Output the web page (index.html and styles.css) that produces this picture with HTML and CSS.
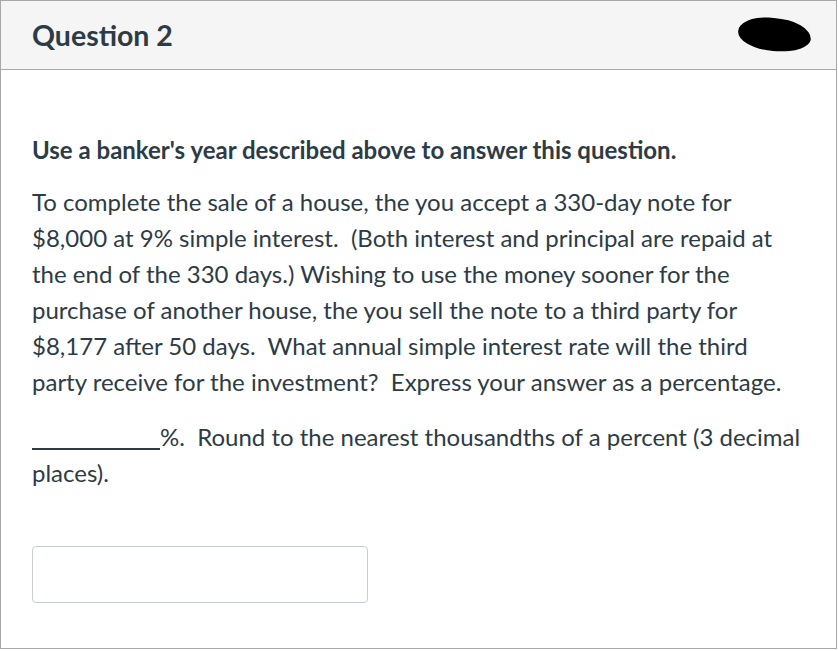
FILE: index.html
```html
<!DOCTYPE html>
<html>
<head>
<meta charset="utf-8">
<link rel="stylesheet" href="styles.css">
</head>
<body>
<div class="card">
  <div class="header">
    <h2 class="title">Question 2</h2>
    <div class="blob"></div>
  </div>
  <div class="body">
    <p class="lead">Use a banker's year described above to answer this question.</p>
    <p class="text">To complete the sale of a house, the you accept a 330-day note for $8,000 at 9% simple interest.&nbsp; (Both interest and principal are repaid at the end of the 330 days.) Wishing to use the money sooner for the purchase of another house, the you sell the note to a third party for $8,177 after 50 days.&nbsp; What annual simple interest rate will the third party receive for the investment?&nbsp; Express your answer as a percentage.</p>
    <p class="text"><span class="blank"></span>%.&nbsp; Round to the nearest thousandths of a percent (3 decimal places).</p>
    <input class="answer" type="text">
  </div>
</div>
</body>
</html>
```
FILE: styles.css
```css
html, body {
  margin: 0;
  padding: 0;
  background: #fff;
}
body {
  font-family: Lato, "Liberation Sans", sans-serif;
  color: #2d3b45;
}
.card {
  width: 835px;
  height: 647px;
  border: 1px solid #a8a8a8;
  display: flex;
  flex-direction: column;
}
.header {
  height: 68px;
  flex: none;
  background: #f5f5f5;
  border-bottom: 1px solid #a8a8a8;
  display: flex;
  align-items: center;
  justify-content: space-between;
  padding: 0 25px 0 31px;
}
.title {
  margin: 0;
  font-size: 28.5px;
  font-weight: 700;
  line-height: 1;
}
.blob {
  width: 73px;
  height: 33px;
  margin-top: -2px;
  background: #000;
  border-radius: 42% 55% 48% 52% / 50% 60% 45% 55%;
  transform: rotate(4deg);
}
.body {
  padding: 62px 32px 0 31px;
}
.lead {
  margin: 0 0 16px 0;
  font-size: 24px;
  font-weight: 700;
  line-height: 36px;
}
.text {
  margin: 0 0 19px 0;
  font-size: 24px;
  line-height: 36px;
}
.blank {
  display: inline-block;
  width: 128px;
  height: 0;
  border-bottom: 2px solid #2d3b45;
  vertical-align: -4px;
}
.answer {
  display: block;
  margin-top: 55px;
  width: 336px;
  height: 57px;
  box-sizing: border-box;
  border: 1px solid #c7cdd1;
  border-radius: 4px;
  background: #fff;
}
```
